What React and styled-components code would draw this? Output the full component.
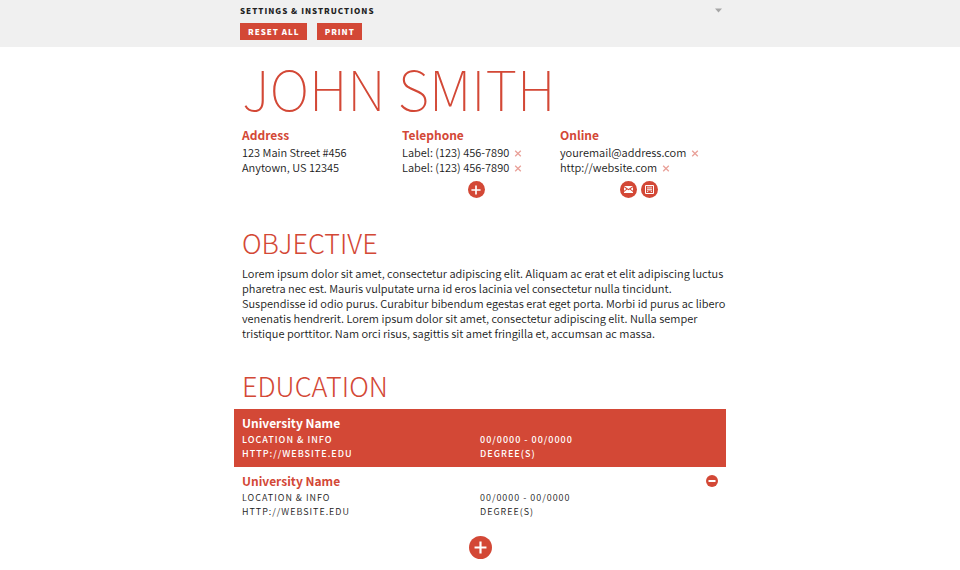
import React from "react";
import styled, { createGlobalStyle, css } from "styled-components";

const red = "#d34836";
const ink = "#1a1a1a";

const GlobalStyle = createGlobalStyle`
  * { box-sizing: border-box; }
  body {
    margin: 0;
    background: #fff;
    color: ${ink};
    font-family: "Noto Sans CJK SC", "Noto Sans", sans-serif;
    font-size: 11px;
    font-weight: 350;
    line-height: 15px;
  }
  h1, h2, h3, p, ul { margin: 0; padding: 0; }
  ul { list-style: none; }
  button { font-family: inherit; border: 0; padding: 0; cursor: pointer; }
`;

const Toolbar = styled.header`
  background: #f0f0f0;
  padding: 3px 0 7px;
`;

const ToolbarInner = styled.div`
  max-width: 492px;
  margin: 0 auto;
  padding: 0 4px 0 6px;
  display: flex;
  flex-direction: column;
  gap: 5px;
`;

const SettingsToggle = styled.button`
  display: flex;
  align-items: center;
  justify-content: space-between;
  background: none;
  color: #222;
  font-size: 8px;
  font-weight: 900;
  line-height: 15px;
  letter-spacing: 1px;
  text-transform: uppercase;
`;

const Actions = styled.div`
  display: flex;
  gap: 10px;
`;

const ActionButton = styled.button`
  background: ${red};
  color: #fff;
  padding: 0 7px 0 8px;
  font-size: 8px;
  font-weight: 900;
  line-height: 17px;
  letter-spacing: 1px;
  text-transform: uppercase;
`;

const Resume = styled.main`
  max-width: 492px;
  margin: 0 auto;
  padding: 12px 0 10px;
`;

const Block = styled.section`
  padding: 0 8px;
`;

const Name = styled.h1`
  color: ${red};
  font-size: 55px;
  font-weight: 100;
  line-height: 56px;
  text-transform: uppercase;
`;

const Contacts = styled.div`
  display: grid;
  grid-template-columns: 150fr 148fr 158fr;
  gap: 10px;
  margin-top: 11px;
`;

const Contact = styled.div`
  white-space: nowrap;
`;

const Label = styled.h3`
  color: ${red};
  font-size: 12px;
  font-weight: 700;
  line-height: 18px;
`;

const Entries = styled.ul`
  margin-top: 1px;
`;

const Entry = styled.li`
  display: flex;
  align-items: center;
  gap: 3px;
`;

const RemoveButton = styled.button`
  display: flex;
  background: none;
  color: #e9a199;
`;

const AddRow = styled.div`
  display: flex;
  justify-content: center;
  gap: 4px;
  margin-top: ${(p) => p.$space}px;
`;

const RoundButton = styled.button`
  display: flex;
  align-items: center;
  justify-content: center;
  width: ${(p) => p.$size}px;
  height: ${(p) => p.$size}px;
  border-radius: 50%;
  background: ${red};
  color: #fff;
`;

const SectionTitle = styled.h2`
  color: ${red};
  font-size: 27px;
  font-weight: 300;
  line-height: 36px;
  text-transform: uppercase;
  margin-top: 27px;
`;

const Paragraph = styled.p`
  margin: 5px -8px 0 0;
`;

const Schools = styled.div`
  margin-top: 5px;
`;

const School = styled.article`
  padding: 5px 8px 6px;
  ${(p) =>
    p.$active &&
    css`
      background: ${red};
      color: #fff;
      font-weight: 500;
      ${SchoolName} { color: #fff; }
    `}
`;

const SchoolHead = styled.div`
  display: flex;
  align-items: center;
  justify-content: space-between;
`;

const SchoolName = styled(Label)``;

const Details = styled.div`
  display: grid;
  grid-template-columns: 1fr 1fr;
  margin-top: 1px;
  font-size: 9px;
  line-height: 14px;
  letter-spacing: 1px;
  text-transform: uppercase;
`;

const Plus = ({ size }) => (
  <svg width={size} height={size} viewBox="0 0 12 12" aria-hidden="true">
    <path d="M6 0.5v11M0.5 6h11" stroke="currentColor" strokeWidth="2" />
  </svg>
);

const Minus = () => (
  <svg width="8" height="8" viewBox="0 0 8 8" aria-hidden="true">
    <path d="M0.5 4h7" stroke="currentColor" strokeWidth="2" />
  </svg>
);

const Cross = () => (
  <svg width="12" height="12" viewBox="0 0 12 12" aria-hidden="true">
    <path d="M3.2 3.7l5.6 5.6M8.8 3.7l-5.6 5.6" stroke="currentColor" strokeWidth="1.3" />
  </svg>
);

const Caret = () => (
  <svg width="7" height="5" viewBox="0 0 7 5" aria-hidden="true">
    <path d="M0 0.5h7L3.5 4.5z" fill="#a6a6a6" />
  </svg>
);

const Envelope = () => (
  <svg width="9" height="7" viewBox="0 0 9 7" aria-hidden="true">
    <path d="M0 0h9L4.5 3z" fill="#fff" />
    <path d="M0 1.2l2.4 1.7L0 4.8zM9 1.2L6.6 2.9 9 4.8z" fill="#fff" />
    <path d="M0 7V6l3.2-2.5 1.3 0.8 1.3-0.8L9 6v1z" fill="#fff" />
  </svg>
);

const Site = () => (
  <svg width="9" height="9" viewBox="0 0 9 9" aria-hidden="true">
    <path d="M0.5 0.5h8v8h-8z" fill="none" stroke="#fff" />
    <path d="M2 2.2h5" stroke="#fff" strokeWidth="0.8" />
    <path d="M2 3.5h5v2H2z" fill="#fff" fillOpacity="0.75" />
    <path d="M2 6.6h1.2M5.8 6.6h1.2" stroke="#fff" strokeWidth="0.9" />
  </svg>
);

const Removable = ({ children }) => (
  <Entry>
    {children}
    <RemoveButton aria-label={`Remove ${children}`}>
      <Cross />
    </RemoveButton>
  </Entry>
);

const Education = ({ active, removable }) => (
  <School $active={active}>
    <SchoolHead>
      <SchoolName>University Name</SchoolName>
      {removable && (
        <RoundButton $size={12} aria-label="Remove school">
          <Minus />
        </RoundButton>
      )}
    </SchoolHead>
    <Details>
      <span>Location &amp; Info</span>
      <span>00/0000 - 00/0000</span>
      <span>http://website.edu</span>
      <span>Degree(s)</span>
    </Details>
  </School>
);

export default function App() {
  return (
    <>
      <GlobalStyle />
      <Toolbar>
        <ToolbarInner>
          <SettingsToggle>
            Settings &amp; Instructions
            <Caret />
          </SettingsToggle>
          <Actions>
            <ActionButton>Reset all</ActionButton>
            <ActionButton>Print</ActionButton>
          </Actions>
        </ToolbarInner>
      </Toolbar>
      <Resume>
        <Block>
          <Name>John Smith</Name>
          <Contacts>
            <Contact>
              <Label>Address</Label>
              <Entries>
                <Entry>123 Main Street #456</Entry>
                <Entry>Anytown, US 12345</Entry>
              </Entries>
            </Contact>
            <Contact>
              <Label>Telephone</Label>
              <Entries>
                <Removable>Label: (123) 456-7890</Removable>
                <Removable>Label: (123) 456-7890</Removable>
              </Entries>
              <AddRow $space={6}>
                <RoundButton $size={17} aria-label="Add telephone">
                  <Plus size={10} />
                </RoundButton>
              </AddRow>
            </Contact>
            <Contact>
              <Label>Online</Label>
              <Entries>
                <Removable>youremail@address.com</Removable>
                <Removable>http://website.com</Removable>
              </Entries>
              <AddRow $space={6}>
                <RoundButton $size={17} aria-label="Add email">
                  <Envelope />
                </RoundButton>
                <RoundButton $size={17} aria-label="Add website">
                  <Site />
                </RoundButton>
              </AddRow>
            </Contact>
          </Contacts>
        </Block>
        <Block>
          <SectionTitle>Objective</SectionTitle>
          <Paragraph>
            Lorem ipsum dolor sit amet, consectetur adipiscing elit. Aliquam ac erat et elit adipiscing luctus
            pharetra nec est. Mauris vulputate urna id eros lacinia vel consectetur nulla tincidunt.
            Suspendisse id odio purus. Curabitur bibendum egestas erat eget porta. Morbi id purus ac
            libero venenatis hendrerit. Lorem ipsum dolor sit amet, consectetur adipiscing elit. Nulla
            semper tristique porttitor. Nam orci risus, sagittis sit amet fringilla et, accumsan ac massa.
          </Paragraph>
        </Block>
        <Block>
          <SectionTitle>Education</SectionTitle>
        </Block>
        <Schools>
          <Education active />
          <Education removable />
        </Schools>
        <AddRow $space={11}>
          <RoundButton $size={23} aria-label="Add school">
            <Plus size={13} />
          </RoundButton>
        </AddRow>
      </Resume>
    </>
  );
}
